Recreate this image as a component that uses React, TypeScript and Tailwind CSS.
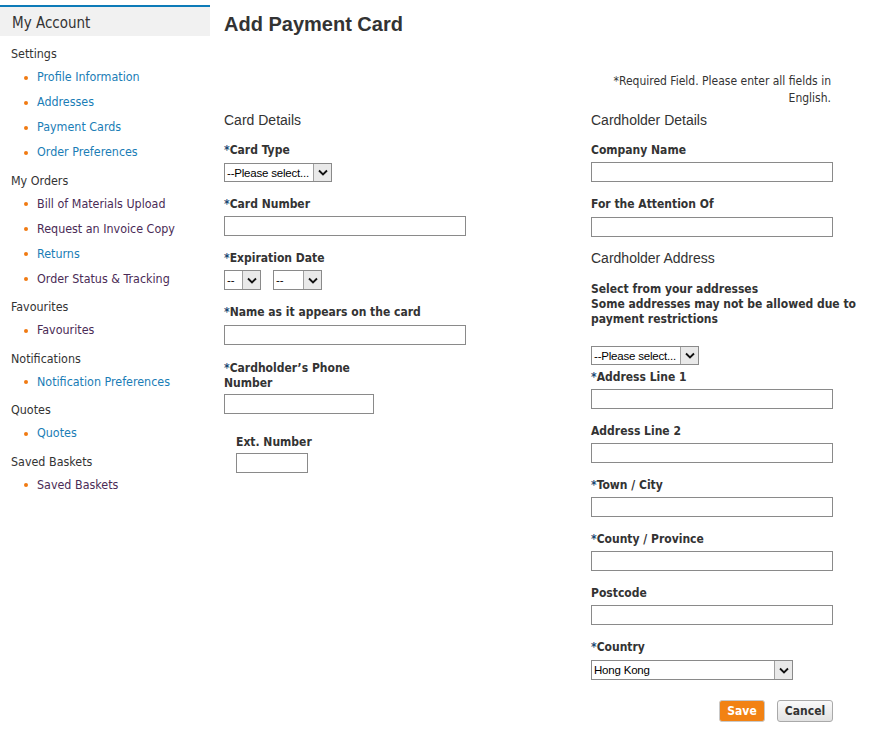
const nav = [
  {
    title: 'Settings',
    items: [
      { label: 'Profile Information', visited: false },
      { label: 'Addresses', visited: false },
      { label: 'Payment Cards', visited: false },
      { label: 'Order Preferences', visited: false },
    ],
  },
  {
    title: 'My Orders',
    items: [
      { label: 'Bill of Materials Upload', visited: true },
      { label: 'Request an Invoice Copy', visited: true },
      { label: 'Returns', visited: false },
      { label: 'Order Status & Tracking', visited: true },
    ],
  },
  { title: 'Favourites', items: [{ label: 'Favourites', visited: true }] },
  { title: 'Notifications', items: [{ label: 'Notification Preferences', visited: false }] },
  { title: 'Quotes', items: [{ label: 'Quotes', visited: false }] },
  { title: 'Saved Baskets', items: [{ label: 'Saved Baskets', visited: true }] },
]

const ui = "font-['Tahoma','DejaVu_Sans_Condensed','DejaVu_Sans',sans-serif]"
const arial = "font-['Liberation_Sans',Arial,sans-serif]"

function Label({ text, req, className = '' }: { text: string; req?: boolean; className?: string }) {
  return (
    <div className={`${ui} text-[12px] font-bold leading-[15px] text-[#333] ${className}`}>
      {req && <span className="text-[#1c4a73]">*</span>}
      {text}
    </div>
  )
}

function TextBox({ w = 'w-[242px]' }: { w?: string }) {
  return <div className={`${w} h-[20px] border border-[#8a8a8a] bg-white`} />
}

function Select({ value, w, h = 'h-[20px]' }: { value: string; w: string; h?: string }) {
  return (
    <div className={`${w} ${h} flex border border-[#8a8a8a] bg-white`}>
      <div className={`flex-1 ${arial} text-[11.5px] leading-[18px] pl-[2px] text-black overflow-hidden whitespace-nowrap tracking-[-0.2px]`}>{value}</div>
      <div className="w-[18px] border-l border-[#a0a0a0] bg-[#e9e9e9] flex items-center justify-center">
        <svg width="10" height="7" viewBox="0 0 10 7">
          <path d="M1 1.5 L5 5.5 L9 1.5" stroke="#111" strokeWidth="1.8" fill="none" />
        </svg>
      </div>
    </div>
  )
}

function Field({ label, req, w }: { label: string; req?: boolean; w?: string }) {
  return (
    <div className="mb-[14.5px]">
      <Label text={label} req={req} className="mb-[4.5px]" />
      <TextBox w={w} />
    </div>
  )
}

export default function App() {
  return (
    <div className="w-[894px] h-[745px] bg-white flex">
      <aside className={`w-[210px] shrink-0 pt-[5px] ${ui}`}>
        <div className="border-t-[2px] border-[#0d7bb8]" />
        <div className="bg-[#f1f1f1] h-[29px] pl-[12px] pt-[3px] text-[15px] leading-[26px] text-[#333]">My Account</div>
        <div className="pl-[11px] pt-[7px]">
          {nav.map((sec) => (
            <div key={sec.title} className="mb-[4.5px]">
              <div className="text-[12.4px] leading-[22px] text-[#333]">{sec.title}</div>
              {sec.items.map((it) => (
                <div key={it.label} className="flex items-center h-[25px] text-[12.4px]">
                  <span className="w-[4px] h-[4px] rounded-full bg-[#f07a12] ml-[13px] mr-[9px]" />
                  <span className={it.visited ? 'text-[#4a2b56]' : 'text-[#1a7db6]'}>{it.label}</span>
                </div>
              ))}
            </div>
          ))}
        </div>
      </aside>

      <main className="flex-1 pl-[14px]">
        <h1 className={`${arial} text-[20px] font-bold text-[#333] leading-[24px] mt-[12px]`}>Add Payment Card</h1>
        <div className="flex justify-end pr-[63px] mt-[37px]">
          <p className={`${ui} w-[230px] text-right text-[12px] leading-[17px] text-[#333]`}>
            *Required Field. Please enter all fields in English.
          </p>
        </div>

        <div className="flex mt-[5px]">
          <div className="w-[367px]">
            <div className={`${arial} text-[14px] leading-[16px] text-[#333] mb-[14.5px]`}>Card Details</div>
            <div className="mb-[14.5px]">
              <Label text="Card Type" req className="mb-[5.5px]" />
              <Select value="--Please select..." w="w-[108px]" h="h-[19px]" />
            </div>
            <Field label="Card Number" req />
            <div className="mb-[14.5px]">
              <Label text="Expiration Date" req className="mb-[4.5px]" />
              <div className="flex gap-[12px]">
                <Select value="--" w="w-[37px]" />
                <Select value="--" w="w-[49px]" />
              </div>
            </div>
            <div className="mb-[15.5px]">
              <Label text="Name as it appears on the card" req className="mb-[5.5px]" />
              <TextBox />
            </div>
            <div className="mb-[20.5px]">
              <Label text="Cardholder’s Phone Number" req className="mb-[3.5px] w-[150px]" />
              <TextBox w="w-[150px]" />
            </div>
            <div className="pl-[12px]">
              <Label text="Ext. Number" className="mb-[3.5px]" />
              <TextBox w="w-[72px]" />
            </div>
          </div>

          <div className="w-[270px]">
            <div className={`${arial} text-[14px] leading-[16px] text-[#333] mb-[14.5px]`}>Cardholder Details</div>
            <Field label="Company Name" />
            <div className="mb-[13px]">
              <Label text="For the Attention Of" className="mb-[5.5px]" />
              <TextBox />
            </div>
            <div className={`${arial} text-[14px] leading-[16px] text-[#333] mb-[15.5px]`}>Cardholder Address</div>
            <Label text="Select from your addresses" className="leading-[15.5px]" />
            <Label text="Some addresses may not be allowed due to payment restrictions" className="leading-[15.5px] mb-[19.5px]" />
            <Select value="--Please select..." w="w-[108px]" h="h-[19px]" />
            <div className="mt-[4.5px]">
              <Field label="Address Line 1" req />
              <Field label="Address Line 2" />
              <Field label="Town / City" req />
              <Field label="County / Province" req />
              <Field label="Postcode" />
              <div>
                <Label text="Country" req className="mb-[5.5px]" />
                <Select value="Hong Kong" w="w-[202px]" />
              </div>
            </div>
            <div className="flex justify-end gap-[12px] w-[242px] mt-[20px]">
              <button className={`${ui} h-[22px] w-[46px] rounded-[3px] border border-[#c9c9c9] bg-[#f28213] text-white text-[12px] font-bold`}>Save</button>
              <button className={`${ui} h-[22px] w-[56px] rounded-[3px] border border-[#a9a9a9] bg-gradient-to-b from-[#fafafa] to-[#e2e2e2] text-[#333] text-[12px] font-bold`}>Cancel</button>
            </div>
          </div>
        </div>
      </main>
    </div>
  )
}
